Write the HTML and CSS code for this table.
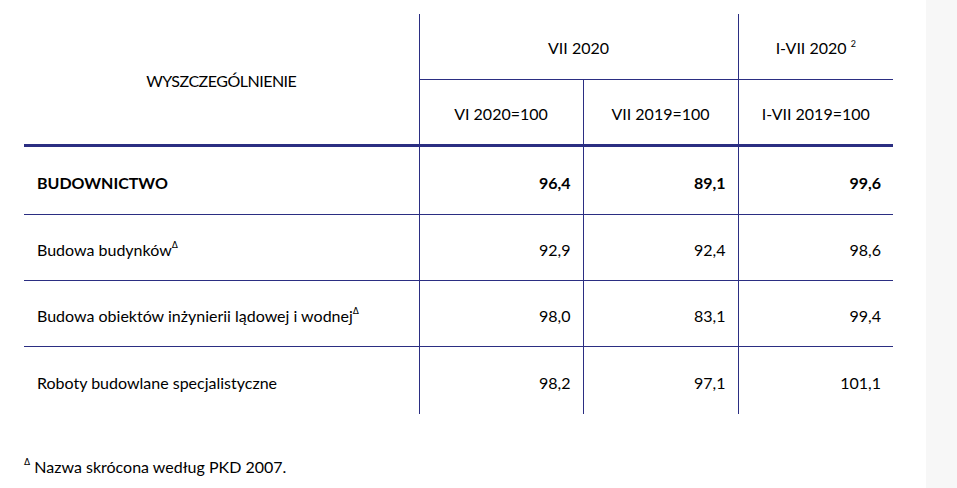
FILE: index.html
```html
<!DOCTYPE html>
<html lang="pl">
<head>
<meta charset="utf-8">
<link rel="stylesheet" href="styles.css">
</head>
<body>
<div class="page">
  <main class="content">
    <table class="stats">
      <colgroup>
        <col class="c-name">
        <col class="c-num">
        <col class="c-num2">
        <col class="c-num2">
      </colgroup>
      <thead>
        <tr class="h1">
          <th rowspan="2" class="name-head">WYSZCZEGÓLNIENIE</th>
          <th colspan="2" class="vl hb">VII 2020</th>
          <th class="vl hb">I-VII 2020 <sup class="sup2">2</sup></th>
        </tr>
        <tr class="h2">
          <th class="vl">VI 2020=100</th>
          <th class="vl">VII 2019=100</th>
          <th class="vl">I-VII 2019=100</th>
        </tr>
      </thead>
      <tbody>
        <tr class="total">
          <td class="label">BUDOWNICTWO</td>
          <td class="num vl">96,4</td>
          <td class="num vl">89,1</td>
          <td class="num vl">99,6</td>
        </tr>
        <tr>
          <td class="label">Budowa budynków<sup class="tri">Δ</sup></td>
          <td class="num vl">92,9</td>
          <td class="num vl">92,4</td>
          <td class="num vl">98,6</td>
        </tr>
        <tr>
          <td class="label">Budowa obiektów inżynierii lądowej i wodnej<sup class="tri">Δ</sup></td>
          <td class="num vl">98,0</td>
          <td class="num vl">83,1</td>
          <td class="num vl">99,4</td>
        </tr>
        <tr class="last">
          <td class="label">Roboty budowlane specjalistyczne</td>
          <td class="num vl">98,2</td>
          <td class="num vl">97,1</td>
          <td class="num vl">101,1</td>
        </tr>
      </tbody>
    </table>
    <p class="note"><sup class="tri">Δ</sup> Nazwa skrócona według PKD 2007.</p>
  </main>
  <aside class="side"></aside>
</div>
</body>
</html>
```
FILE: styles.css
```css
html, body {
  margin: 0;
  padding: 0;
  background: #ffffff;
}
body {
  font-family: "Lato", "Open Sans", sans-serif;
  font-size: 16px;
  color: #000;
}
.page {
  display: flex;
  width: 957px;
  height: 488px;
  overflow: hidden;
}
.content {
  width: 926px;
  padding: 14px 0 0 24px;
  box-sizing: border-box;
}
.side {
  flex: 1;
  background: #f7f7f7;
}
.stats {
  border-collapse: collapse;
  table-layout: fixed;
  width: 869px;
}
.c-name { width: 395px; }
.c-num { width: 164px; }
.c-num2 { width: 155px; }

.stats th {
  font-weight: normal;
  padding: 0;
  text-align: center;
}
.stats th, .stats td {
  box-sizing: border-box;
}
.vl { border-left: 1px solid #2b2e82; }
.hb { border-bottom: 1px solid #2b2e82; }
.h1 th { height: 65px; padding-top: 3px; }
.h2 th { height: 66px; padding-top: 4px; }
.name-head { padding-top: 2px; letter-spacing: -0.5px; }
thead tr.h2 th, thead .name-head { border-bottom: 3px solid #2b2e82; }

.stats td {
  height: 66px;
  padding: 4px 12px 0 13px;
  border-bottom: 1px solid #2b2e82;
}
.stats tr.total td { height: 69px; padding-top: 5px; }
.stats tr.last td { border-bottom: none; height: 68px; }
.stats td.num { text-align: right; padding-right: 12px; }
.total td { font-weight: bold; }

.sup2 {
  font-size: 9px;
  vertical-align: 7px;
  line-height: 0;
}
.tri {
  font-size: 9px;
  vertical-align: 8px;
  line-height: 0;
  font-family: "DejaVu Sans", sans-serif;
}
.note {
  margin: 43px 0 0 0;
  font-size: 16px;
}
```
